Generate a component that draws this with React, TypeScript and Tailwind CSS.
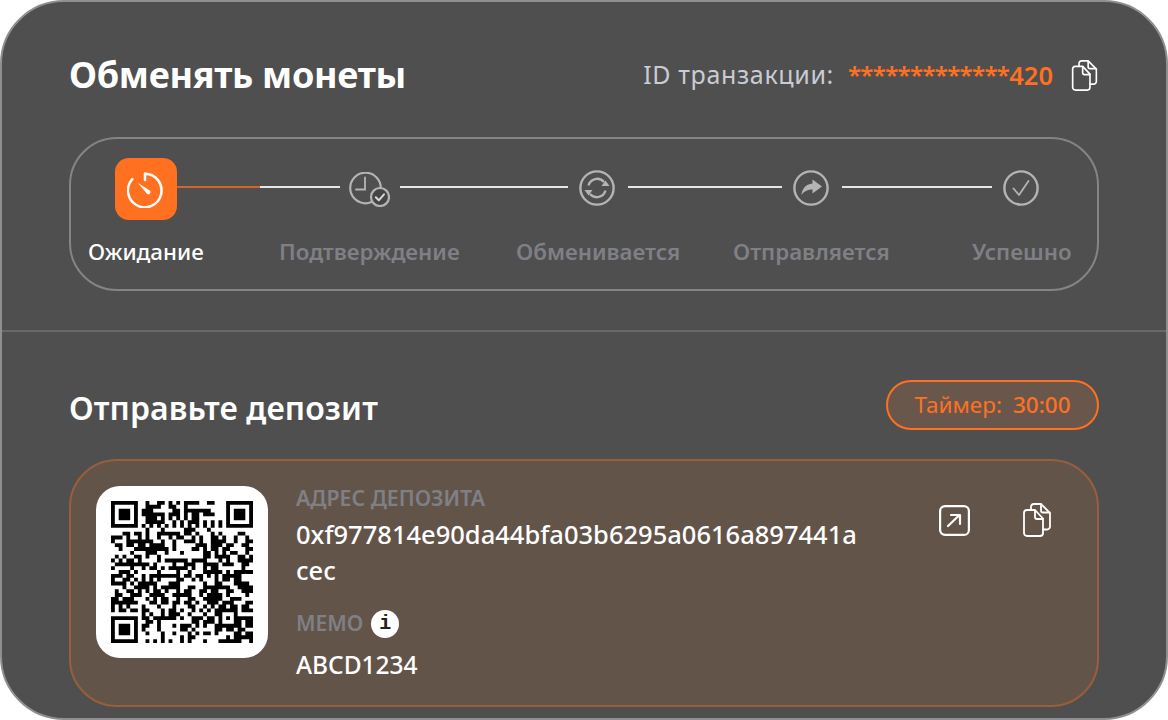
import React from "react";

// Real QR code of the deposit address (version 5, level H, byte mode, mask 6)
function buildQr(text: string, mask: number): boolean[][] {
  const size = 37;
  const bits: number[] = [];
  const push = (v: number, n: number) => { for (let i = n - 1; i >= 0; i--) bits.push((v >>> i) & 1); };
  push(4, 4); push(text.length, 8);
  for (const c of text) push(c.charCodeAt(0), 8);
  const cap = 46 * 8;
  push(0, Math.min(4, cap - bits.length));
  while (bits.length % 8) bits.push(0);
  for (let p = 0xec; bits.length < cap; p ^= 0xec ^ 0x11) push(p, 8);
  const data: number[] = [];
  for (let i = 0; i < bits.length; i += 8) data.push(parseInt(bits.slice(i, i + 8).join(""), 2));
  const mul = (x: number, y: number) => {
    let z = 0;
    for (let i = 7; i >= 0; i--) { z = (z << 1) ^ ((z >>> 7) * 0x11d); z ^= ((y >>> i) & 1) * x; }
    return z;
  };
  const deg = 22;
  const div = new Array(deg).fill(0); div[deg - 1] = 1;
  let root = 1;
  for (let i = 0; i < deg; i++) {
    for (let j = 0; j < deg; j++) { div[j] = mul(div[j], root); if (j + 1 < deg) div[j] ^= div[j + 1]; }
    root = mul(root, 2);
  }
  const blocks: number[][] = []; const eccs: number[][] = [];
  let k = 0;
  for (const len of [11, 11, 12, 12]) {
    const b = data.slice(k, k + len); k += len;
    const r = new Array(deg).fill(0);
    for (const d of b) {
      const f = d ^ r.shift();
      r.push(0);
      div.forEach((c: number, i: number) => { r[i] ^= mul(c, f); });
    }
    blocks.push(b); eccs.push(r);
  }
  const all: number[] = [];
  for (let i = 0; i < 12; i++) for (const b of blocks) if (i < b.length) all.push(b[i]);
  for (let i = 0; i < deg; i++) for (const e of eccs) all.push(e[i]);
  const base: boolean[][] = Array.from({ length: size }, () => new Array(size).fill(false));
  const fn: boolean[][] = Array.from({ length: size }, () => new Array(size).fill(false));
  const setF = (x: number, y: number, v: boolean) => {
    if (x < 0 || y < 0 || x >= size || y >= size) return;
    base[y][x] = v; fn[y][x] = true;
  };
  for (let i = 0; i < size; i++) { setF(6, i, i % 2 === 0); setF(i, 6, i % 2 === 0); }
  for (const [cx, cy] of [[3, 3], [size - 4, 3], [3, size - 4]])
    for (let dy = -4; dy <= 4; dy++) for (let dx = -4; dx <= 4; dx++) {
      const d = Math.max(Math.abs(dx), Math.abs(dy));
      setF(cx + dx, cy + dy, d !== 2 && d !== 4);
    }
  for (let dy = -2; dy <= 2; dy++) for (let dx = -2; dx <= 2; dx++)
    setF(30 + dx, 30 + dy, Math.max(Math.abs(dx), Math.abs(dy)) !== 1);
  const format = (g: boolean[][], m: number, mark: boolean) => {
    const d = (2 << 3) | m;
    let rem = d;
    for (let i = 0; i < 10; i++) rem = (rem << 1) ^ ((rem >>> 9) * 0x537);
    const fb = ((d << 10) | rem) ^ 0x5412;
    const s = (x: number, y: number, v: boolean) => { g[y][x] = v; if (mark) fn[y][x] = true; };
    const b = (i: number) => ((fb >>> i) & 1) === 1;
    for (let i = 0; i <= 5; i++) s(8, i, b(i));
    s(8, 7, b(6)); s(8, 8, b(7)); s(7, 8, b(8));
    for (let i = 9; i < 15; i++) s(14 - i, 8, b(i));
    for (let i = 0; i < 8; i++) s(size - 1 - i, 8, b(i));
    for (let i = 8; i < 15; i++) s(8, size - 15 + i, b(i));
    s(8, size - 8, true);
  };
  format(base, 0, true);
  let idx = 0;
  for (let right = size - 1; right >= 1; right -= 2) {
    if (right === 6) right = 5;
    for (let v = 0; v < size; v++) for (let j = 0; j < 2; j++) {
      const x = right - j;
      const y = ((right + 1) & 2) === 0 ? size - 1 - v : v;
      if (!fn[y][x] && idx < all.length * 8) {
        base[y][x] = ((all[idx >>> 3] >>> (7 - (idx & 7))) & 1) === 1;
        idx++;
      }
    }
  }
  const g = base.map((r, y) =>
    r.map((v, x) => (fn[y][x] ? v : v !== ((((x * y) % 2) + ((x * y) % 3)) % 2 === 0))),
  );
  format(g, mask, false);
  return g;
}

const ADDRESS = "0xf977814e90da44bfa03b6295a0616a897441acec";
const qrPath = buildQr(ADDRESS, 6)
  .map((r, y) => r.map((v, x) => (v ? `M${x} ${y}h1v1h-1z` : "")).join(""))
  .join("");

function CopyIcon({ className }: { className?: string }) {
  return (
    <svg viewBox="0 0 28 34" fill="none" stroke="currentColor" strokeWidth="1.8" strokeLinejoin="round" strokeLinecap="round" className={className}>
      <path d="M1 10a3 3 0 0 1 3-3h8l8 8.5V30a3 3 0 0 1-3 3H4a3 3 0 0 1-3-3z" />
      <path d="M12 7.500V14a2 2 0 0 0 2 2h6" />
      <path d="M8 7V4a3 3 0 0 1 3-3h7l9 9v13.500a3 3 0 0 1-3 3h-4" />
      <path d="M18 1.500V7.500a2 2 0 0 0 2 2h6.500" />
    </svg>
  );
}

const Line = ({ className }: { className: string }) => <div className={`h-[2px] -mt-[4px] ${className}`} />;

const stroke = "#b4b4b4";

function TimerIcon() {
  return (
    <svg viewBox="0 0 38 38" className="w-[38px] h-[38px]" fill="none" stroke="white" strokeWidth="2.500" strokeLinecap="round">
      <path d="M18 3.700a16.800 16.800 0 1 1-12.700 5.500" />
      <path d="M18 3.700v6.300" />
      <path d="M11 13l11.800 7.500a2 2 0 0 1-2.800 3.300z" fill="white" stroke="none" />
    </svg>
  );
}

function ClockCheck() {
  return (
    <svg viewBox="0 0 41 35" className="w-[41px] h-[35px]" fill="none" stroke={stroke} strokeWidth="2.200" strokeLinecap="round">
      <circle cx="16.500" cy="16" r="15.300" />
      <path d="M16 5.500v12H7" strokeWidth="1.800" />
      <circle cx="31" cy="25" r="9" fill="#444444" />
      <path d="M26.800 25.300l3 3 5.200-6" strokeWidth="2" stroke="#d8d8d8" strokeLinejoin="round" />
    </svg>
  );
}

function SyncIcon() {
  return (
    <svg viewBox="0 0 36 36" className="w-[36px] h-[36px]" fill="none" stroke={stroke} strokeWidth="2.400">
      <circle cx="18" cy="18" r="16.600" />
      <path d="M9.500 15.500a9 9 0 0 1 15.500-3.500" strokeWidth="2.400" />
      <path d="M26.500 20.500a9 9 0 0 1-15.500 3.500" strokeWidth="2.400" />
      <path d="M22.500 16h8l-4-5.500z" fill={stroke} stroke="none" />
      <path d="M13.500 20H5.500l4 5.500z" fill={stroke} stroke="none" />
    </svg>
  );
}

function ShareIcon() {
  return (
    <svg viewBox="0 0 36 36" className="w-[36px] h-[36px]" fill="none" stroke={stroke} strokeWidth="2.400">
      <circle cx="18" cy="18" r="16.600" />
      <path d="M19.500 9.500 L29 16.500 19.500 23.500V19.500c-4.500 0-8 1.300-11 5.500.5-6 4-10.800 11-11.500z" fill={stroke} stroke="none" />
    </svg>
  );
}

function CheckIcon() {
  return (
    <svg viewBox="0 0 36 36" className="w-[36px] h-[36px]" fill="none" stroke={stroke} strokeWidth="2.400">
      <circle cx="18" cy="18" r="16.600" />
      <path d="M10.500 18.500l5.500 6.500 9.500-14" strokeWidth="1.800" strokeLinecap="round" strokeLinejoin="round" />
    </svg>
  );
}

export default function App() {
  return (
    <div className="w-[1168px] h-[720px] bg-white overflow-hidden font-['Noto_Sans',sans-serif]">
      <div className="w-full h-full rounded-[64px] border-2 border-[#8f8f8f] bg-[#4f4f4f] flex flex-col">
        {/* header */}
        <div className="h-[135px] shrink-0 pl-[67px] pr-[68px] pt-[46px] flex items-start justify-between">
          <h1 className="text-[36px] leading-[54px] font-bold text-white tracking-[-0.3px] whitespace-nowrap">Обменять монеты</h1>
          <div className="flex items-center h-[54px] whitespace-nowrap">
            <span className="text-[25px] text-[#c9ccd3] tracking-[0.65px]">ID транзакции:</span>
            <span className="ml-[14px] text-[24px] font-semibold text-[#ff7120] tracking-[-0.7px]">*************</span>
            <span className="text-[25.500px] font-semibold text-[#ff7120]">420</span>
            <CopyIcon className="ml-[18px] w-[27px] h-[31px] text-white" />
          </div>
        </div>

        {/* stepper */}
        <div className="mx-[67px] h-[154px] shrink-0 rounded-[48px] border-2 border-[#858585] pt-[19px]">
          <div className="flex items-center h-[62px] pl-[44px]">
            <div className="w-[62px] h-[62px] rounded-[14px] bg-[#ff7120] flex items-center justify-center shrink-0">
              <TimerIcon />
            </div>
            <Line className="w-[83px] bg-[#d9622a]" />
            <Line className="w-[80px] bg-[#e4e6ea]" />
            <div className="ml-[9px] mr-[10px] mt-[1px]"><ClockCheck /></div>
            <Line className="w-[168px] bg-[#e4e6ea]" />
            <div className="ml-[11px] mr-[13px] -mt-[3px]"><SyncIcon /></div>
            <Line className="w-[154px] bg-[#e4e6ea]" />
            <div className="ml-[11px] mr-[13px] -mt-[3px]"><ShareIcon /></div>
            <Line className="w-[150px] bg-[#e4e6ea]" />
            <div className="ml-[11px] -mt-[3px]"><CheckIcon /></div>
          </div>
          <div className="flex items-center mt-[16px] h-[32px] text-[22.300px] font-semibold text-[#7f8085] whitespace-nowrap">
            <span className="ml-[17px] w-[191px] text-white font-medium">Ожидание</span>
            <span className="w-[237px]">Подтверждение</span>
            <span className="w-[217px]">Обменивается</span>
            <span className="w-[239px]">Отправляется</span>
            <span>Успешно</span>
          </div>
        </div>

        <div className="mt-[39px] h-[2px] shrink-0 bg-[#686868]" />

        {/* deposit header */}
        <div className="mt-[48px] mx-[67px] h-[52px] shrink-0 flex items-start justify-between">
          <h2 className="mt-[5px] text-[32px] leading-[46px] font-semibold text-white tracking-[0.1px]">Отправьте депозит</h2>
          <div className="w-[213px] h-[50px] rounded-full border-2 border-[#ff7120] bg-[#6a574c] text-[#ff7120] text-[22.500px] flex items-center justify-center gap-[11px]">
            <span>Таймер:</span>
            <span className="font-medium">30:00</span>
          </div>
        </div>

        {/* deposit card */}
        <div className="mt-[27px] mx-[67px] h-[248px] shrink-0 rounded-[48px] border-2 border-[#9a5f3a] bg-[#63544a] flex pl-[25px] pt-[25px]">
          <div className="w-[172px] h-[172px] rounded-[24px] bg-white shrink-0 flex items-center justify-center">
            <svg viewBox="0 0 37 37" className="w-[142px] h-[142px]"><path d={qrPath} fill="#000" /></svg>
          </div>
          <div className="ml-[28px] w-[566px] shrink-0 -mt-[1px]">
            <div className="text-[21.300px] leading-[26px] font-semibold text-[#7f8085] whitespace-nowrap">АДРЕС ДЕПОЗИТА</div>
            <div className="mt-[5px] text-[25.500px] leading-[36px] font-medium text-white break-all">{ADDRESS}</div>
            <div className="mt-[22px] flex items-center h-[28px]">
              <span className="text-[21px] font-semibold text-[#7f8085]">MEMO</span>
              <span className="ml-[8px] w-[28px] h-[28px] rounded-full bg-white text-[#222] flex items-center justify-center text-[20px] font-bold font-['Liberation_Mono',monospace]">i</span>
            </div>
            <div className="mt-[11px] text-[24.500px] leading-[32px] font-medium text-white">ABCD1234</div>
          </div>
          <div className="flex items-start ml-[77px] pt-[17px] text-white">
            <svg viewBox="0 0 31 31" className="w-[31px] h-[31px] mt-[2px] shrink-0" fill="none" stroke="currentColor" strokeWidth="2.200" strokeLinecap="round" strokeLinejoin="round">
              <rect x="1.100" y="1.100" width="28.800" height="28.800" rx="5" />
              <path d="M9 21 20 10.500M12 10h9v9" />
            </svg>
            <CopyIcon className="ml-[53px] w-[28px] h-[34px] shrink-0" />
          </div>
        </div>
      </div>
    </div>
  );
}
